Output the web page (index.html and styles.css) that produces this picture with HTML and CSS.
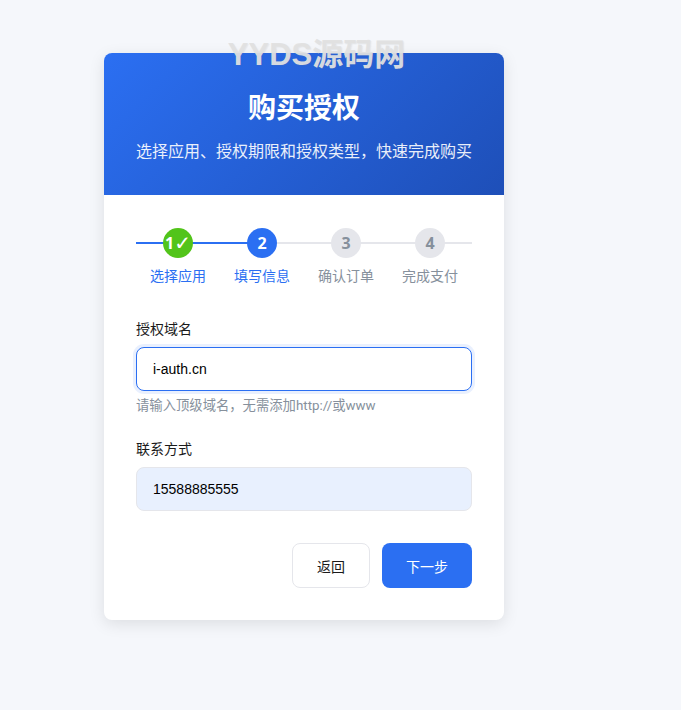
FILE: index.html
```html
<!DOCTYPE html>
<html lang="zh-CN">
<head>
<meta charset="utf-8">
<title>购买授权</title>
<link rel="stylesheet" href="styles.css">
</head>
<body>
<div class="watermark">YYDS源码网</div>
<main class="card">
  <header class="card-head">
    <h1>购买授权</h1>
    <p>选择应用、授权期限和授权类型，快速完成购买</p>
  </header>
  <div class="card-body">
    <ol class="steps">
      <li class="step done"><span class="dot">1<span class="tick">✓</span></span><span class="name">选择应用</span></li>
      <li class="step active"><span class="dot">2</span><span class="name">填写信息</span></li>
      <li class="step"><span class="dot">3</span><span class="name">确认订单</span></li>
      <li class="step"><span class="dot">4</span><span class="name">完成支付</span></li>
    </ol>
    <div class="field">
      <label for="domain">授权域名</label>
      <input id="domain" class="focus" type="text" value="i-auth.cn">
      <small>请输入顶级域名，无需添加http://或www</small>
    </div>
    <div class="field">
      <label for="contact">联系方式</label>
      <input id="contact" class="filled" type="text" value="15588885555">
    </div>
    <div class="actions">
      <button class="btn ghost" type="button">返回</button>
      <button class="btn primary" type="button">下一步</button>
    </div>
  </div>
</main>
</body>
</html>
```
FILE: styles.css
```css
* { box-sizing: border-box; }
html, body { margin: 0; height: 100%; }
body {
  position: relative;
  background: #f5f7fb;
  font-family: "Liberation Sans", "Noto Sans CJK SC", sans-serif;
  color: #1a1a1a;
  font-size: 14px;
  padding: 53px 177px 0 104px;
  overflow: hidden;
}
.watermark {
  position: absolute;
  top: 35px;
  left: 104px;
  width: 425px;
  text-align: center;
  font-size: 31px;
  line-height: 40px;
  font-weight: 700;
  color: rgba(225, 225, 225, 0.95);
  text-shadow: 1px 1px 1px rgba(120, 120, 120, 0.12);
  z-index: 2;
}
.card {
  width: 400px;
  background: #fff;
  border-radius: 8px;
  overflow: hidden;
  box-shadow: 0 4px 16px rgba(0, 0, 0, 0.1);
}
.card-head {
  height: 142px;
  padding: 35px 32px 0;
  text-align: center;
  color: #fff;
  background: linear-gradient(135deg, #2b6ff2, #1e4fb8);
}
.card-head h1 {
  margin: 0 0 10px;
  font-size: 28px;
  line-height: 42px;
  font-weight: 700;
}
.card-head p {
  margin: 0;
  font-size: 16px;
  line-height: 24px;
  white-space: nowrap;
  opacity: 0.9;
}
.card-body { padding: 33px 32px 32px; }
.steps {
  display: flex;
  position: relative;
  list-style: none;
  margin: 0 0 33px;
  padding: 0;
}
.steps::before {
  content: "";
  position: absolute;
  left: 0;
  right: 0;
  top: 14px;
  height: 2px;
  background: linear-gradient(90deg, #2b6ff2 0, #2b6ff2 126px, #e5e6eb 126px);
}
.step {
  position: relative;
  flex: 1;
  display: flex;
  flex-direction: column;
  align-items: center;
  gap: 8px;
  color: #86909c;
}
.dot {
  width: 30px;
  height: 30px;
  padding-bottom: 1px;
  border-radius: 50%;
  display: flex;
  align-items: center;
  justify-content: center;
  background: #e5e6eb;
  font-family: "Open Sans", "Noto Sans CJK SC", sans-serif;
  font-size: 16px;
  font-weight: 700;
  white-space: nowrap;
}
.tick {
  font-family: "DejaVu Sans", sans-serif;
  font-weight: 400;
  font-size: 20px;
  line-height: 1;
}
.name { font-size: 14px; line-height: 20px; }
.step.done .dot { background: #52c41a; color: #fff; }
.step.active .dot { background: #2b6ff2; color: #fff; }
.step.done .name, .step.active .name { color: #2b6ff2; }
.field { display: flex; flex-direction: column; margin-bottom: 24px; }
.field label { font-size: 14px; line-height: 20px; margin-bottom: 8px; color: #1a1a1a; }
.field input {
  height: 44px;
  width: 100%;
  padding: 0 16px;
  border: 1px solid #e5e6eb;
  border-radius: 8px;
  font: 14px "Liberation Sans", "Noto Sans CJK SC", sans-serif;
  color: #000;
  outline: none;
}
.field input.focus { border-color: #2b6ff2; box-shadow: 0 0 0 3px rgba(43, 111, 242, 0.1); }
.field input.filled { background: #e8f0fe; }
.field small {
  font-family: Roboto, "Noto Sans CJK SC", sans-serif;
  font-size: 13.33px;
  line-height: 20px;
  margin-top: 5px;
  margin-bottom: -1px;
  color: #86909c;
}
.actions { display: flex; justify-content: flex-end; gap: 12px; margin-top: 32px; }
.btn {
  height: 45px;
  padding: 0 24px;
  border-radius: 8px;
  font: 14px "Liberation Sans", "Noto Sans CJK SC", sans-serif;
}
.btn.ghost { background: #fff; border: 1px solid #e5e6eb; color: #1a1a1a; }
.btn.primary { background: #2b6ff2; border: 0; color: #fff; }
```
